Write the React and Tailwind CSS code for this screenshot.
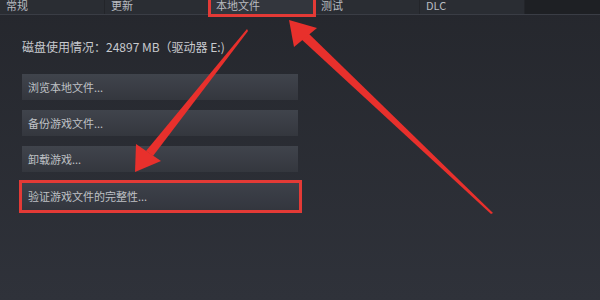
const TABS = ["常规", "更新", "本地文件", "测试", "DLC"];

const BUTTONS = ["浏览本地文件...", "备份游戏文件...", "卸载游戏..."];

function Arrows() {
    return (
        <svg className="absolute inset-0 pointer-events-none" width="600" height="300" viewBox="0 0 600 300">
            {/* arrow to the tab */}
            <polygon points="493,213 491,214 300,38 306,31" fill="#e8302c" />
            <polygon points="289,20 317,28 294,47" fill="#e8302c" />
            {/* arrow to the verify button */}
            <polygon points="247,29 248,31 153,156 146,151" fill="#e8302c" />
            <polygon points="135,172 136,144 161,161" fill="#e8302c" />
        </svg>
    );
}

export default function App() {
    return (
        <div
            className="relative w-[600px] h-[300px] overflow-hidden bg-gradient-to-b from-[#25272d] to-[#2f323a] text-[#c4c6ca]"
            style={{fontFamily: '"Noto Sans CJK SC", "Liberation Sans", sans-serif'}}
        >
            <div className="flex h-[15px] border-b border-[#3a3d45] bg-[#2a2d33]">
                {TABS.map((tab, i) => (
                    <div
                        key={tab}
                        className={`relative w-[105px] h-full border-r border-[#23252a] text-[11px] leading-none ${i === 2 ? 'bg-[#33363d]' : ''}`}
                    >
                        <span className="absolute left-[6px] top-[0px] text-[#b9bcc1]">{tab}</span>
                        {i === 2 && (
                            <div className="absolute left-[-2px] right-[-2px] top-[-3px] bottom-[-3px] border-[3px] border-[#e33a36]" />
                        )}
                    </div>
                ))}
                <div className="flex-1 bg-[#1e2024]" />
            </div>

            <div className="pl-[22px] pt-[25px]">
                <div className="text-[12px] leading-[14px] text-[#c8cace]">
                    磁盘使用情况：24897 MB（驱动器 E:)
                </div>

                <div className="mt-[20px] flex flex-col gap-[10px] w-[276px]">
                    {BUTTONS.map((label) => (
                        <div
                            key={label}
                            className="h-[26px] flex items-center pl-[6px] text-[11px] text-[#bfc1c5] bg-gradient-to-b from-[#40444c] to-[#34373e]"
                        >
                            {label}
                        </div>
                    ))}
                </div>

                <div className="mt-[8px] ml-[-3px] w-[283px] border-[3px] border-[#e33a36]">
                    <div className="h-[27px] flex items-center pl-[6px] text-[11px] text-[#bfc1c5] bg-gradient-to-b from-[#3d414a] to-[#33363e]">
                        验证游戏文件的完整性...
                    </div>
                </div>
            </div>

            <Arrows />
        </div>
    );
}
